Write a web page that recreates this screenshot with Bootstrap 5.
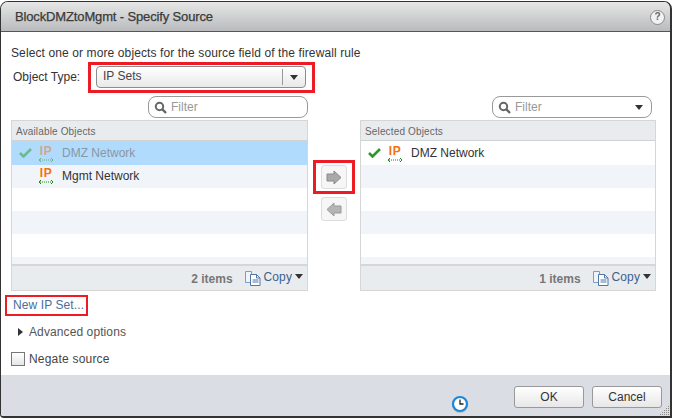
<!DOCTYPE html>
<html lang="en">
<head>
<meta charset="utf-8">
<title>Specify Source</title>
<link href="https://cdn.jsdelivr.net/npm/bootstrap@5.3.0/dist/css/bootstrap.min.css" rel="stylesheet">
<style>
html,body{height:100%;background:#fff;overflow:hidden}
body{font-family:"Liberation Sans",Arial,sans-serif;font-size:12px;color:#333;padding-top:1px}
.dlg{position:relative;width:672px;height:417px;border:solid #333;border-width:1px 2px 2px 1px;border-radius:8px 8px 0 4px;overflow:hidden;display:flex;flex-direction:column;background:#fff}
.dlg-head{height:30px;flex:none;background:linear-gradient(#e6e6e6,#b9bbbc);border-bottom:1px solid #555;padding-left:14px;font-size:13px;line-height:29px;color:#3a3a3a;-webkit-text-stroke:.25px #3a3a3a;letter-spacing:-.14px}
.help-ico{width:15px;height:15px;border-radius:50%;background:#f2f2f2;border:1.5px solid #888;font-weight:700;font-size:10px;line-height:12px;text-align:center;color:#666;margin:8px 5px 0 0;-webkit-text-stroke:0;letter-spacing:0}
.dlg-body{flex:1;padding:14px 0 0 10px;min-height:0}
.lead-line{line-height:14px;height:14px;letter-spacing:.11px}
.type-row{height:31px;margin-top:2px;display:flex;align-items:center}
.type-label{width:77px;padding:0 0 2px 2px}
.hl{border:3px solid #ed1c24}
.type-hl{width:227px;height:31px;padding:1px 5px}
.type-sel{width:210px;height:22px;border:1px solid #8c8c8c;border-radius:4px;background:linear-gradient(#fff,#e9e9e9);padding-left:6px;line-height:19px;font-size:12px;color:#444}
.type-arrow{width:23px;border-left:1px solid #999;height:16px;margin:2px 0;display:flex;align-items:center;justify-content:center}
.tri-d{width:0;height:0;border:4px solid transparent;border-top:5px solid #333;border-bottom:0}
.filter-row{height:22px;margin-top:3px}
.fbox{width:160px;height:22px;border:1px solid #999;border-radius:8px;padding:0 4px 0 5px;color:#999;line-height:20px;font-size:12px;gap:4px}
.f-left{margin-left:137px}
.f-right{margin-left:184px}
.panes{margin-top:2px;height:171px}
.pane{width:297px;height:171px;border:1px solid #d6d6d6;background:#fff;display:flex;flex-direction:column}
.pane-r{width:296px}
.pane-head{height:20px;flex:none;background:#e9ecef;border-bottom:1px solid #d0d3d6;padding-left:4px;font-size:10px;line-height:21px;color:#666;letter-spacing:.15px}
.pane-rows{flex:1;overflow:hidden;min-height:0}
.rw{height:23px;display:flex;align-items:center;font-size:12px;color:#333}
.rw:first-child{height:24px}
.rw:nth-child(2){padding-bottom:2px}
.rw:nth-child(even){background:#f1f5fa}
.rw.sel{background:#b0dbfd;color:#8a97a3}
.rw.sel .ico-wrap{opacity:.5}
.chk-slot{width:22px;flex:none;padding-left:7px;display:flex}
.ip-ico{width:24px;flex:none;height:21px;padding-top:3px;display:flex;flex-direction:column;align-items:center;margin-right:4px}
.ip-ico b{font-size:12px;line-height:11px;color:#f5700f;letter-spacing:.5px;font-weight:700}
.pane-foot{height:26px;flex:none;border-top:2px solid #d6d6d6;background:#e9ecef;display:flex;align-items:center;justify-content:flex-end;padding-right:4px}
.cnt{font-weight:700;color:#777;margin-right:12px;padding-top:2px}
.cpy{color:#3c5f8a;display:flex;align-items:center;gap:3px}
.cpy span{margin-top:-3px;letter-spacing:.1px}
.mid-col{width:52px;flex:none;display:flex;flex-direction:column;align-items:center;padding-top:40px}
.arrow-hl{width:42px;height:34px;display:flex;align-items:center;justify-content:center}
.mv-btn{width:26px;height:24px;border:1px solid #ddd;border-radius:3px;background:#f6f6f6;display:flex;align-items:center;justify-content:center;padding:0}
.mv-gap{margin-top:3px}
.new-hl{display:inline-block;border-width:2px;height:21px;line-height:17px;padding:0 2px 0 6px;margin:4px 0 0 -6px;color:#4a6d9c;letter-spacing:.1px}
.adv{margin-top:9px;height:14px;line-height:14px;color:#555;display:flex;align-items:center;letter-spacing:.1px}
.tri-r{width:0;height:0;border:4.5px solid transparent;border-left:5px solid #333;border-right:0;margin:0 6px 0 7px}
.neg{margin-top:12px;display:flex;align-items:center;height:15px;color:#444;gap:4px;letter-spacing:.2px}
.neg i{display:block;width:14px;height:14px;border:1px solid #777;background:linear-gradient(#fff,#e6e6e6)}
.dlg-foot{height:41px;flex:none;background:#dadde4;padding:11px 8px 0 0;gap:8px;display:flex;justify-content:flex-end}
.act-btn{width:70px;height:22px;padding:0;font-size:12px;line-height:20px;color:#333;border:1px solid #999;border-radius:3px;background:linear-gradient(#fff,#e7e7e7);font-family:inherit}
.clock-ico{position:absolute;left:449px;top:392px}
.grip{position:absolute;right:0;bottom:0}
</style>
</head>
<body>
<div class="dlg">
  <div class="dlg-head d-flex justify-content-between">
    <span>BlockDMZtoMgmt - Specify Source</span>
    <span class="help-ico">?</span>
  </div>
  <div class="dlg-body">
    <div class="lead-line">Select one or more objects for the source field of the firewall rule</div>
    <div class="type-row">
      <div class="type-label">Object Type:</div>
      <div class="hl type-hl">
        <div class="type-sel d-flex justify-content-between"><span>IP Sets</span><span class="type-arrow"><span class="tri-d"></span></span></div>
      </div>
    </div>
    <div class="filter-row d-flex">
      <div class="fbox f-left d-flex align-items-center">
        <svg width="13" height="13" viewBox="0 0 13 13"><circle cx="5.5" cy="5.5" r="3.7" fill="none" stroke="#666" stroke-width="2"/><path d="M8.2 8.2 12 12" stroke="#666" stroke-width="2.4"/></svg><span>Filter</span>
      </div>
      <div class="fbox f-right d-flex align-items-center">
        <svg width="13" height="13" viewBox="0 0 13 13"><circle cx="5.5" cy="5.5" r="3.7" fill="none" stroke="#666" stroke-width="2"/><path d="M8.2 8.2 12 12" stroke="#666" stroke-width="2.4"/></svg><span>Filter</span>
        <span class="tri-d ms-auto me-1"></span>
      </div>
    </div>
    <div class="panes d-flex">
      <div class="pane">
        <div class="pane-head">Available Objects</div>
        <div class="pane-rows">
          <div class="rw sel">
            <span class="chk-slot ico-wrap"><svg width="13" height="10" viewBox="0 0 13 10"><path d="M1 5l3.5 3.5L12 1" fill="none" stroke="#2a9a2a" stroke-width="2.6"/></svg></span>
            <span class="ip-ico ico-wrap"><b>IP</b><svg width="16" height="6" viewBox="0 0 16 6"><path d="M3 1 1 3l2 2M13 1l2 2-2 2" fill="none" stroke="#1a8a1a"/><path d="M2 3h12" stroke="#1a8a1a" stroke-dasharray="1 1"/></svg></span>
            <span>DMZ Network</span>
          </div>
          <div class="rw">
            <span class="chk-slot"></span>
            <span class="ip-ico"><b>IP</b><svg width="16" height="6" viewBox="0 0 16 6"><path d="M3 1 1 3l2 2M13 1l2 2-2 2" fill="none" stroke="#1a8a1a"/><path d="M2 3h12" stroke="#1a8a1a" stroke-dasharray="1 1"/></svg></span>
            <span>Mgmt Network</span>
          </div>
          <div class="rw"></div><div class="rw"></div><div class="rw"></div><div class="rw"></div>
        </div>
        <div class="pane-foot">
          <span class="cnt">2 items</span>
          <span class="cpy"><svg width="16" height="16" viewBox="0 0 16 16"><path d="M.5 1.5h6v11h-6z" fill="#eef4fa" stroke="#7f9cc0"/><path d="M5.5 4.5h6L15 8v7.500H5.500z" fill="#fff" stroke="#4f77a8"/><path d="M11.500 4.500V8H15M7.500 10h6M7.500 12h6" fill="none" stroke="#4f77a8"/></svg><span>Copy</span><span class="tri-d"></span></span>
        </div>
      </div>
      <div class="mid-col">
        <div class="hl arrow-hl">
          <button class="mv-btn" type="button" aria-label="Add"><svg width="16" height="15" viewBox="0 0 16 15"><path d="M1 4h7V1l7 6.500-7 6.500v-3H1z" fill="#a9a9a9" stroke="#8a8a8a"/></svg></button>
        </div>
        <button class="mv-btn mv-gap" type="button" aria-label="Remove"><svg width="16" height="15" viewBox="0 0 16 15"><path d="M15 4H8V1L1 7.500 8 14v-3h7z" fill="#b5b5b5" stroke="#999"/></svg></button>
      </div>
      <div class="pane pane-r">
        <div class="pane-head">Selected Objects</div>
        <div class="pane-rows">
          <div class="rw">
            <span class="chk-slot"><svg width="13" height="10" viewBox="0 0 13 10"><path d="M1 5l3.500 3.500L12 1" fill="none" stroke="#2a9a2a" stroke-width="2.600"/></svg></span>
            <span class="ip-ico"><b>IP</b><svg width="16" height="6" viewBox="0 0 16 6"><path d="M3 1 1 3l2 2M13 1l2 2-2 2" fill="none" stroke="#1a8a1a"/><path d="M2 3h12" stroke="#1a8a1a" stroke-dasharray="1 1"/></svg></span>
            <span>DMZ Network</span>
          </div>
          <div class="rw"></div><div class="rw"></div><div class="rw"></div><div class="rw"></div><div class="rw"></div>
        </div>
        <div class="pane-foot">
          <span class="cnt">1 items</span>
          <span class="cpy"><svg width="16" height="16" viewBox="0 0 16 16"><path d="M.5 1.500h6v11h-6z" fill="#eef4fa" stroke="#7f9cc0"/><path d="M5.500 4.500h6L15 8v7.500H5.500z" fill="#fff" stroke="#4f77a8"/><path d="M11.500 4.500V8H15M7.500 10h6M7.500 12h6" fill="none" stroke="#4f77a8"/></svg><span>Copy</span><span class="tri-d"></span></span>
        </div>
      </div>
    </div>
    <div><span class="hl new-hl">New IP Set...</span></div>
    <div class="adv"><span class="tri-r"></span>Advanced options</div>
    <div class="neg"><i></i>Negate source</div>
  </div>
  <div class="dlg-foot">
    <button class="act-btn" type="button">OK</button>
    <button class="act-btn" type="button">Cancel</button>
  </div>
  <svg class="clock-ico" width="20" height="20" viewBox="0 0 20 20"><circle cx="10" cy="11" r="8" fill="#bbb"/><circle cx="10" cy="10" r="7" fill="#fff" stroke="#1c87d8" stroke-width="2.200"/><path d="M10 5.500V10h3.500" fill="none" stroke="#222" stroke-width="1.300"/></svg>
  <svg class="grip" width="10" height="10" viewBox="0 0 10 10" fill="#8a8a8a"><rect x="8" y="0" width="1" height="1"/><rect x="6" y="2" width="1" height="1"/><rect x="8" y="2" width="1" height="1"/><rect x="4" y="4" width="1" height="1"/><rect x="6" y="4" width="1" height="1"/><rect x="8" y="4" width="1" height="1"/><rect x="2" y="6" width="1" height="1"/><rect x="4" y="6" width="1" height="1"/><rect x="6" y="6" width="1" height="1"/><rect x="8" y="6" width="1" height="1"/><rect x="0" y="8" width="1" height="1"/><rect x="2" y="8" width="1" height="1"/><rect x="4" y="8" width="1" height="1"/><rect x="6" y="8" width="1" height="1"/><rect x="8" y="8" width="1" height="1"/></svg>
</div>
<script src="https://cdn.jsdelivr.net/npm/bootstrap@5.3.0/dist/js/bootstrap.bundle.min.js"></script>
</body>
</html>
